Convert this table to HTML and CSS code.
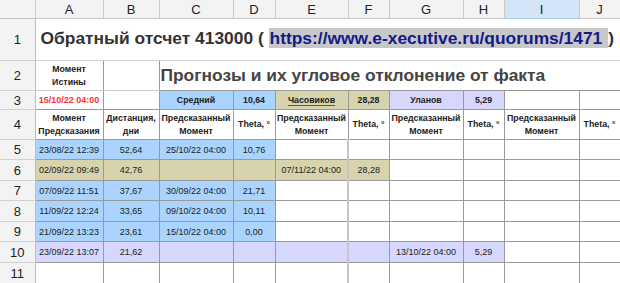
FILE: index.html
```html
<!DOCTYPE html>
<html lang="ru">
<head>
<meta charset="utf-8">
<title>Прогнозы</title>
<link rel="stylesheet" href="styles.css">
</head>
<body>
<table class="sheet">
  <colgroup>
    <col class="w-rh"><col class="w-a"><col class="w-b"><col class="w-c"><col class="w-d"><col class="w-e"><col class="w-f"><col class="w-g"><col class="w-h"><col class="w-i"><col class="w-j">
  </colgroup>
  <thead>
    <tr class="colhdr">
      <th class="corner"></th><th>A</th><th>B</th><th>C</th><th>D</th><th>E</th><th>F</th><th>G</th><th>H</th><th class="active">I</th><th>J</th>
    </tr>
  </thead>
  <tbody>
    <tr class="r1">
      <th class="rh">1</th>
      <td colspan="10" class="title">Обратный отсчет 413000 ( <span class="sel"><a class="link">https://www.e-xecutive.ru/quorums/1471</a> </span>)</td>
    </tr>
    <tr class="r2">
      <th class="rh">2</th>
      <td class="hd">Момент<br>Истины</td>
      <td class="cell"></td>
      <td colspan="8" class="subtitle">Прогнозы и их угловое отклонение от факта</td>
    </tr>
    <tr class="r3">
      <th class="rh">3</th>
      <td class="cell truth">15/10/22 04:00</td>
      <td class="cell"></td>
      <td class="cell hd blue">Средний</td>
      <td class="cell hd blue">10,64</td>
      <td class="cell hd khaki"><span class="spell">Часовиков</span></td>
      <td class="cell hd khaki">28,28</td>
      <td class="cell hd lav">Уланов</td>
      <td class="cell hd lav">5,29</td>
      <td class="cell"></td>
      <td class="cell last"></td>
    </tr>
    <tr class="r4">
      <th class="rh">4</th>
      <td class="cell hd">Момент<br>Предсказания</td>
      <td class="cell hd">Дистанция,<br>дни</td>
      <td class="cell hd">Предсказанный<br>Момент</td>
      <td class="cell hd">Theta, °</td>
      <td class="cell hd">Предсказанный<br>Момент</td>
      <td class="cell hd">Theta, °</td>
      <td class="cell hd">Предсказанный<br>Момент</td>
      <td class="cell hd">Theta, °</td>
      <td class="cell hd">Предсказанный<br>Момент</td>
      <td class="cell hd last">Theta, °</td>
    </tr>
    <tr class="rd ra">
      <th class="rh">5</th>
      <td class="cell blue">23/08/22 12:39</td><td class="cell blue">52,64</td><td class="cell blue">25/10/22 04:00</td><td class="cell blue">10,76</td>
      <td class="cell"></td><td class="cell split"></td><td class="cell"></td><td class="cell"></td><td class="cell"></td><td class="cell last"></td>
    </tr>
    <tr class="rd rb">
      <th class="rh">6</th>
      <td class="cell khaki">02/09/22 09:49</td><td class="cell khaki">42,76</td><td class="cell khaki"></td><td class="cell khaki"></td>
      <td class="cell khaki">07/11/22 04:00</td><td class="cell khaki split">28,28</td><td class="cell"></td><td class="cell"></td><td class="cell"></td><td class="cell last"></td>
    </tr>
    <tr class="rd ra">
      <th class="rh">7</th>
      <td class="cell blue">07/09/22 11:51</td><td class="cell blue">37,67</td><td class="cell blue">30/09/22 04:00</td><td class="cell blue">21,71</td>
      <td class="cell"></td><td class="cell split"></td><td class="cell"></td><td class="cell"></td><td class="cell"></td><td class="cell last"></td>
    </tr>
    <tr class="rd rb">
      <th class="rh">8</th>
      <td class="cell blue">11/09/22 12:24</td><td class="cell blue">33,65</td><td class="cell blue">09/10/22 04:00</td><td class="cell blue">10,11</td>
      <td class="cell"></td><td class="cell split"></td><td class="cell"></td><td class="cell"></td><td class="cell"></td><td class="cell last"></td>
    </tr>
    <tr class="rd ra">
      <th class="rh">9</th>
      <td class="cell blue">21/09/22 13:23</td><td class="cell blue">23,61</td><td class="cell blue">15/10/22 04:00</td><td class="cell blue">0,00</td>
      <td class="cell"></td><td class="cell split"></td><td class="cell"></td><td class="cell"></td><td class="cell"></td><td class="cell last"></td>
    </tr>
    <tr class="rd rb">
      <th class="rh">10</th>
      <td class="cell lav">23/09/22 13:07</td><td class="cell lav">21,62</td><td class="cell lav"></td><td class="cell lav"></td>
      <td class="cell lav"></td><td class="cell lav split"></td><td class="cell lav">13/10/22 04:00</td><td class="cell lav">5,29</td><td class="cell"></td><td class="cell last"></td>
    </tr>
    <tr class="rd rb">
      <th class="rh">11</th>
      <td class="cell"></td><td class="cell"></td><td class="cell"></td><td class="cell"></td>
      <td class="cell"></td><td class="cell split"></td><td class="cell"></td><td class="cell"></td><td class="cell"></td><td class="cell last"></td>
    </tr>
  </tbody>
</table>
</body>
</html>
```

FILE: styles.css
```css
html, body {
  margin: 0;
  padding: 0;
  background: #ffffff;
}

.sheet {
  border-collapse: collapse;
  table-layout: fixed;
  width: 620px;
  font-family: "Liberation Sans", Arial, sans-serif;
  color: #222;
}

.w-rh { width: 35px; }
.w-a { width: 68px; }
.w-b { width: 56px; }
.w-c { width: 74px; }
.w-d { width: 42px; }
.w-e { width: 73px; }
.w-f { width: 41px; }
.w-g { width: 74px; }
.w-h { width: 41px; }
.w-i { width: 75px; }
.w-j { width: 41px; }

td, th {
  padding: 0;
  text-align: center;
  vertical-align: middle;
  overflow: hidden;
  white-space: nowrap;
}

.colhdr th {
  height: 18px;
  background: #f3f3f3;
  border-right: 1px solid #c9c9c9;
  border-bottom: 1px solid #c4c4c4;
  font-size: 13px;
  font-weight: normal;
  color: #222;
}

.colhdr th.active {
  background: #d3e5f7;
  border-bottom: 1px solid #a9c8e8;
}

.rh {
  background: #f3f3f3;
  border-right: 1px solid #bdbdbd;
  border-bottom: 1px solid #d0d0d0;
  font-size: 13px;
  font-weight: normal;
  color: #222;
}

.r1 td, .r1 th { height: 39px; }
.r2 td, .r2 th { height: 29px; }
.r3 td, .r3 th { height: 18px; }
.r4 td, .r4 th { height: 29px; }
.ra td, .ra th { height: 19px; }
.rb td, .rb th { height: 20px; }

.title {
  text-align: left;
  padding-left: 5px;
  padding-bottom: 2px;
  font-size: 17.4px;
  font-weight: bold;
  color: #333;
  border-bottom: 1px solid #d0d0d0;
}

.sel {
  background: #c8c8c8;
  padding: 0 1px;
}

.link {
  color: #14198a;
}

.subtitle {
  text-align: left;
  padding-left: 1px;
  font-size: 17.4px;
  font-weight: bold;
  color: #444;
  border-bottom: 1px solid #9a9a9a;
}

.cell {
  border: 1px solid #9a9a9a;
  font-size: 9px;
}

.r2 .hd {
  border-right: 1px solid #9a9a9a;
  border-bottom: 1px solid #c9c9c9;
}

.hd {
  font-size: 8.8px;
  font-weight: bold;
  line-height: 13px;
}

.r2 .cell {
  border-bottom: 1px solid #c9c9c9;
}

.truth {
  color: #ff3030;
  font-weight: bold;
}

.blue { background: #aad4fe; }
.khaki { background: #d6d3ad; }
.lav { background: #d7d6fd; }

.spell {
  text-decoration: underline;
  text-decoration-color: #e41b1b;
  text-underline-offset: 2px;
}

.split {
  border-left: 2px solid #c6c6c6;
}

.last {
  border-right: 1px solid #8a8a8a;
}
```
